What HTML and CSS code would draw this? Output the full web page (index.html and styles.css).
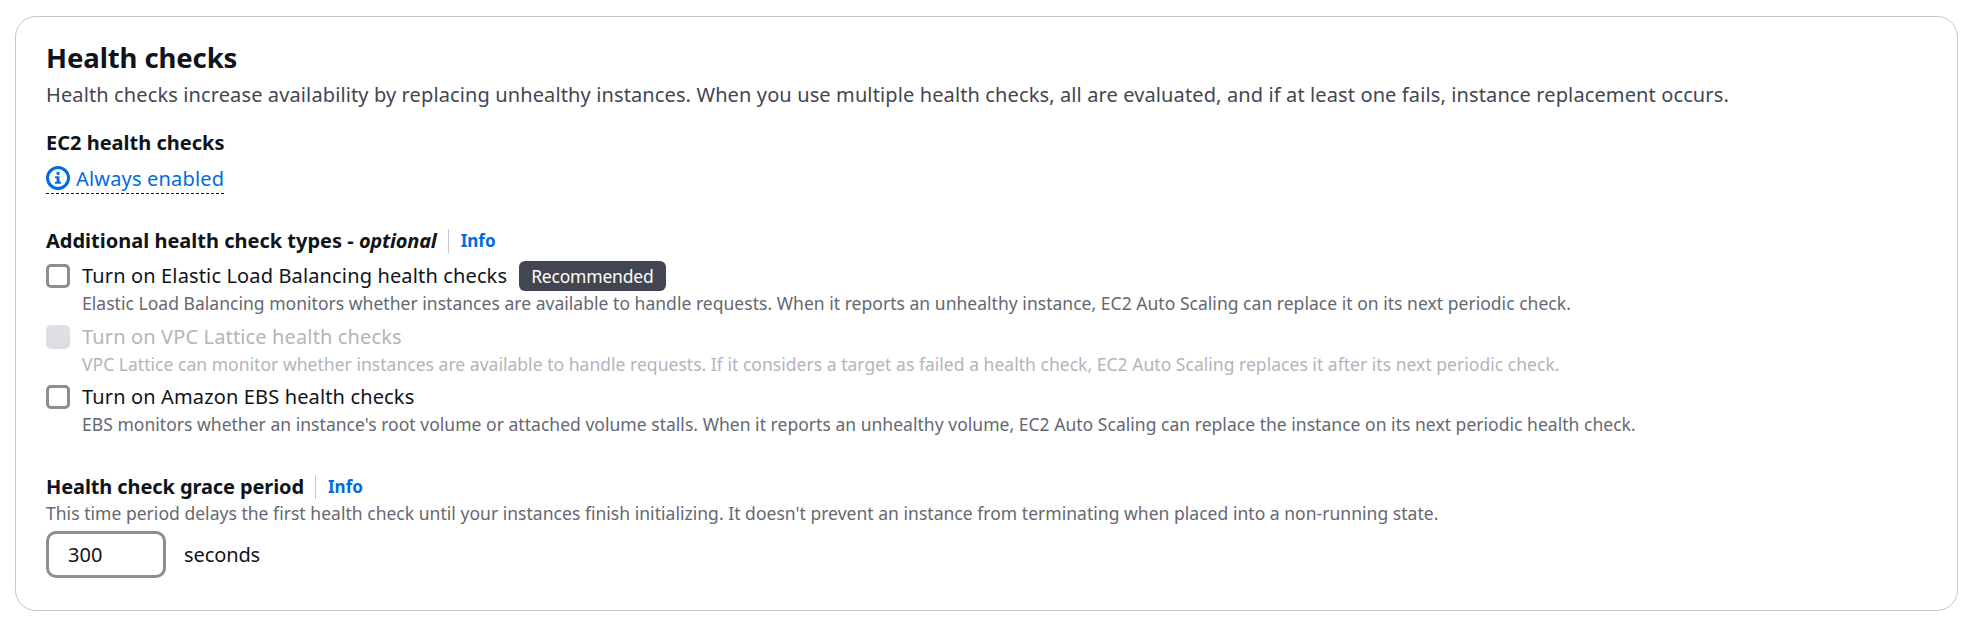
FILE: index.html
```html
<!DOCTYPE html>
<html lang="en">
<head>
<meta charset="utf-8">
<title>Health checks</title>
<link rel="stylesheet" href="styles.css">
</head>
<body>
<section class="card">
  <h2 class="title">Health checks</h2>
  <p class="lead">Health checks increase availability by replacing unhealthy instances. When you use multiple health checks, all are evaluated, and if at least one fails, instance replacement occurs.</p>

  <div class="field ec2">
    <div class="label">EC2 health checks</div>
    <a class="always">
      <svg class="info-icon" viewBox="0 0 24 24" aria-hidden="true"><circle cx="12" cy="12" r="10.5" fill="none" stroke="#006ce0" stroke-width="3"/><rect x="10.6" y="10.4" width="2.9" height="7" fill="#006ce0"/><rect x="9" y="15.8" width="6" height="1.8" fill="#006ce0"/><rect x="9" y="10.4" width="3" height="1.8" fill="#006ce0"/><rect x="10.6" y="6" width="2.9" height="2.9" fill="#006ce0"/></svg>
      <span>Always enabled</span>
    </a>
  </div>

  <div class="field types">
    <div class="label-row"><span class="label">Additional health check types - <em>optional</em></span><span class="divider"></span><a class="info">Info</a></div>
    <div class="check">
      <span class="box"></span>
      <div class="check-body">
        <div class="check-title">Turn on Elastic Load Balancing health checks <span class="badge">Recommended</span></div>
        <div class="hint">Elastic Load Balancing monitors whether instances are available to handle requests. When it reports an unhealthy instance, EC2 Auto Scaling can replace it on its next periodic check.</div>
      </div>
    </div>
    <div class="check disabled">
      <span class="box"></span>
      <div class="check-body">
        <div class="check-title">Turn on VPC Lattice health checks</div>
        <div class="hint">VPC Lattice can monitor whether instances are available to handle requests. If it considers a target as failed a health check, EC2 Auto Scaling replaces it after its next periodic check.</div>
      </div>
    </div>
    <div class="check">
      <span class="box"></span>
      <div class="check-body">
        <div class="check-title">Turn on Amazon EBS health checks</div>
        <div class="hint">EBS monitors whether an instance's root volume or attached volume stalls. When it reports an unhealthy volume, EC2 Auto Scaling can replace the instance on its next periodic health check.</div>
      </div>
    </div>
  </div>

  <div class="field grace">
    <div class="label-row"><span class="label grace-label">Health check grace period</span><span class="divider"></span><a class="info">Info</a></div>
    <div class="desc">This time period delays the first health check until your instances finish initializing. It doesn't prevent an instance from terminating when placed into a non-running state.</div>
    <div class="input-row">
      <div class="input">300</div>
      <span class="unit">seconds</span>
    </div>
  </div>
</section>
</body>
</html>
```
FILE: styles.css
```css
* { box-sizing: border-box; }
html, body { margin: 0; background: #fff; }
body {
  width: 1973px;
  height: 620px;
  padding: 16px 15px 10px;
  font-family: "Noto Sans", "Open Sans", sans-serif;
  color: #0f141a;
  overflow: hidden;
}
.card {
  height: 595px;
  border: 1px solid #c6c6cd;
  border-radius: 21px;
  padding: 26px 30px 0;
}
.title {
  margin: 0;
  font-size: 27.5px;
  line-height: 30px;
  font-weight: 700;
  letter-spacing: -0.1px;
}
.lead {
  margin: 9px 0 0;
  font-size: 20px;
  line-height: 25px;
  letter-spacing: 0.12px;
  color: #424650;
}
.field { display: flex; flex-direction: column; }
.ec2 { margin-top: 23px; }
.label, .label-row { font-size: 20px; line-height: 25px; font-weight: 700; }
.always {
  align-self: flex-start;
  display: flex;
  align-items: center;
  gap: 6px;
  margin-top: 11px;
  height: 28px;
  padding-bottom: 3px;
  font-size: 20px;
  letter-spacing: 0.18px;
  color: #006ce0;
  border-bottom: 1.5px dashed #0f141a;
}
.info-icon { width: 24px; height: 24px; display: block; }
.types { margin-top: 33px; }
.label-row { display: flex; align-items: center; }
.label em { font-style: italic; letter-spacing: -0.2px; }
.grace-label { letter-spacing: -0.1px; }
.divider { flex: none; width: 1px; height: 24px; background: #c6c6cd; margin: 2px 12px 0 11px; }
.info { font-size: 17px; font-weight: 700; color: #006ce0; }
.check { display: flex; gap: 12px; margin-bottom: 10.5px; }
.types .label-row { margin-bottom: 10px; }
.box {
  flex: none;
  width: 24px;
  height: 24px;
  margin-top: 1px;
  border: 3px solid #8c8c94;
  border-radius: 5px;
}
.check-title { font-size: 20px; line-height: 25px; letter-spacing: 0.14px; display: flex; align-items: flex-start; gap: 12px; color: #0f141a; }
.hint { font-size: 17.5px; line-height: 20px; letter-spacing: 0.03px; color: #656871; margin-top: 5px; }
.badge {
  font-size: 17.5px;
  line-height: 20px;
  letter-spacing: -0.2px;
  padding: 5px 12px;
  margin: -2px 0 -3px;
  border-radius: 6px;
  background: #424650;
  color: #fff;
}
.disabled .box { border: 0; background: #dedee3; }
.disabled .check-title, .disabled .hint { color: #b4b4bb; }
.grace { margin-top: 28.5px; }
.desc { font-size: 17.5px; line-height: 20px; letter-spacing: 0.03px; color: #656871; margin-top: 4px; }
.input-row { display: flex; align-items: center; gap: 18px; margin-top: 8px; }
.input {
  width: 120px;
  height: 47px;
  border: 3px solid #8c8c94;
  border-radius: 10px;
  padding: 0 19px;
  font-size: 20px;
  line-height: 41px;
}
.unit { font-size: 20px; letter-spacing: -0.1px; }
```
